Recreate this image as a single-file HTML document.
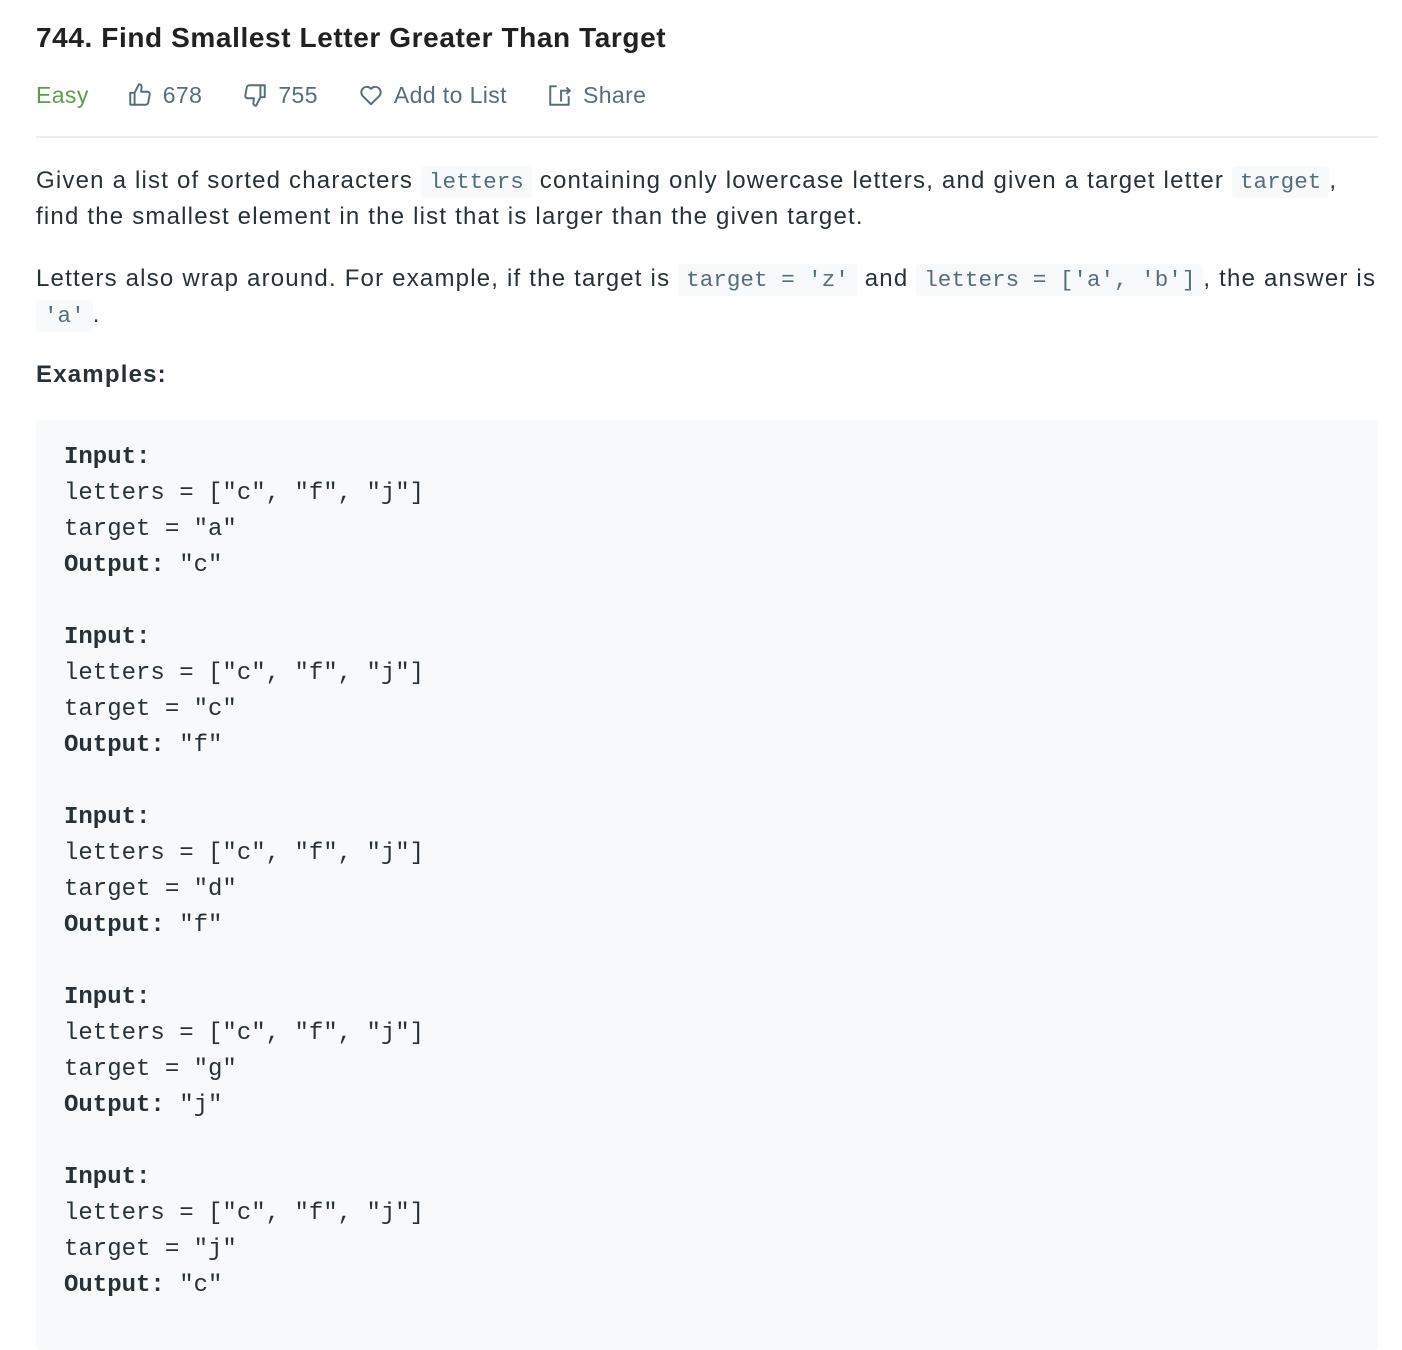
<!DOCTYPE html>
<html><head><meta charset="utf-8"><style>
body{margin:0;background:#fff;color:#263238;font-family:"Liberation Sans",sans-serif;width:1402px;height:1330px;overflow:hidden}
h1{position:absolute;left:36px;top:22px;margin:0;font-size:28px;letter-spacing:0.6px;font-weight:600;color:#212121;white-space:nowrap}
.bar{position:absolute;top:80px;left:36px;height:30px;display:flex;align-items:center;font-size:23px;letter-spacing:0.4px;color:#546e7a;white-space:nowrap}
.bar span{display:inline-flex;align-items:center}
.hr{position:absolute;left:36px;width:1342px;top:136px;height:2px;background:#eceff1}
.p{position:absolute;left:36px;font-size:24px;letter-spacing:1.2px;line-height:36px;white-space:nowrap}
code{font-family:"Liberation Mono",monospace;font-size:22.6px;letter-spacing:0;color:#546e7a;background:#f7f9fa;border-radius:4px;padding:3px 8px}
pre{position:absolute;left:36px;top:420px;width:1342px;height:930px;margin:0;background:#f7f9fa;border-radius:4px;font-family:"Liberation Mono",monospace;font-size:24px;line-height:36px;color:#263238;padding:20px 0 0 28px;box-sizing:border-box}
pre b{font-weight:bold}
</style></head><body>
<h1>744. Find Smallest Letter Greater Than Target</h1>
<div class="bar">
<span style="color:#5a9e4b;font-weight:500">Easy</span>
<span style="margin-left:38px"><svg width="26" height="26" viewBox="0 0 24 24" fill="none" stroke="#546e7a" stroke-width="1.8" stroke-linejoin="round"><path d="M3 10h4v11H3zM7 10l4-8c1.5 0 2.5 1 2.5 2.5L13 9h6a2 2 0 0 1 2 2.3l-1.4 7.5A2.5 2.5 0 0 1 17 21H7"/></svg><span style="margin-left:10px">678</span></span>
<span style="margin-left:40px"><svg width="26" height="26" viewBox="0 0 24 24" fill="none" stroke="#546e7a" stroke-width="1.8" stroke-linejoin="round"><path d="M17 3h4v11h-4zM17 14l-4 8c-1.5 0-2.5-1-2.5-2.5L11 15H5a2 2 0 0 1-2-2.3L4.4 5.2A2.5 2.5 0 0 1 7 3h10"/></svg><span style="margin-left:10px">755</span></span>
<span style="margin-left:40px"><svg width="26" height="26" viewBox="0 0 24 24" fill="none" stroke="#546e7a" stroke-width="1.8" stroke-linejoin="round"><path d="M12 20.5L4.2 12.7A4.8 4.8 0 0 1 12 6.3a4.8 4.8 0 0 1 7.8 6.4z"/></svg><span style="margin-left:10px">Add to List</span></span>
<span style="margin-left:40px"><svg width="26" height="26" viewBox="0 0 24 24" fill="none" stroke="#546e7a" stroke-width="1.8"><path d="M9 4H3v17h17v-8M13 10V8h8M18 5l3 3-3 3M13 10v8"/></svg><span style="margin-left:10px">Share</span></span>
</div>
<div class="hr"></div>
<div class="p" style="top:163px">Given a list of sorted characters <code>letters</code> containing only lowercase letters, and given a target letter <code>target</code>,</div>
<div class="p" style="top:199px">find the smallest element in the list that is larger than the given target.</div>
<div class="p" style="top:261px">Letters also wrap around. For example, if the target is <code>target = 'z'</code> and <code>letters = ['a', 'b']</code>, the answer is</div>
<div class="p" style="top:297px"><code>'a'</code>.</div>
<div class="p" style="top:357px;font-weight:bold">Examples:</div>
<pre><b>Input:</b>
letters = ["c", "f", "j"]
target = "a"
<b>Output:</b> "c"

<b>Input:</b>
letters = ["c", "f", "j"]
target = "c"
<b>Output:</b> "f"

<b>Input:</b>
letters = ["c", "f", "j"]
target = "d"
<b>Output:</b> "f"

<b>Input:</b>
letters = ["c", "f", "j"]
target = "g"
<b>Output:</b> "j"

<b>Input:</b>
letters = ["c", "f", "j"]
target = "j"
<b>Output:</b> "c"
</pre>
</body></html>
